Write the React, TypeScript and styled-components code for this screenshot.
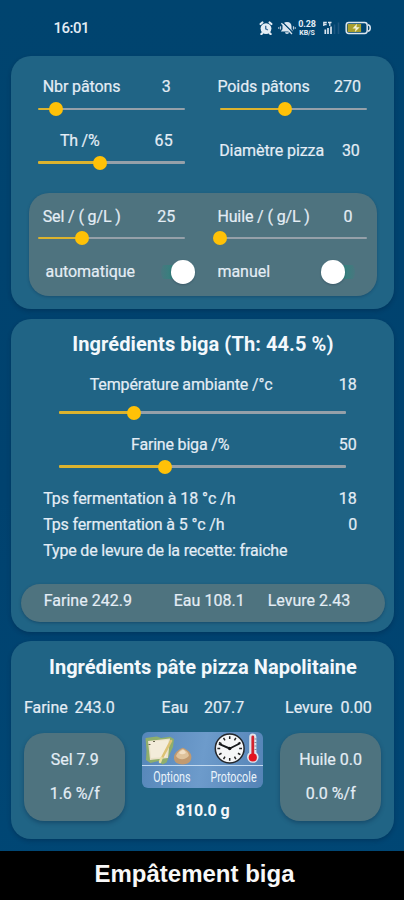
import React from "react";
import styled, { createGlobalStyle } from "styled-components";

const GlobalStyle = createGlobalStyle`
  * { box-sizing: border-box; }
  html, body { margin: 0; padding: 0; background: #004470; }
  body { font-family: Roboto, "Liberation Sans", sans-serif; color: #e4edf5; }
`;

const Screen = styled.main`
  width: 404px;
  height: 900px;
  display: flex;
  flex-direction: column;
  overflow: hidden;
  background: linear-gradient(#00446f, #00426f 55%, #004775);
`;

const StatusBar = styled.header`
  height: 56px;
  flex: none;
  display: flex;
  align-items: center;
  padding: 0 32px 0 53.5px;
`;

const Clock = styled.time`
  flex: 1;
  font-size: 15px;
  line-height: 20px;
  font-weight: 500;
  letter-spacing: -0.5px;
`;

const StatusIcons = styled.div`
  display: flex;
  align-items: center;
  height: 18px;
`;

const NetSpeed = styled.div`
  width: 20px;
  margin: 0 6px 0 1px;
  display: flex;
  flex-direction: column;
  align-items: center;
  font-weight: 700;
`;

const SpeedValue = styled.span`
  font-size: 9px;
  line-height: 10px;
  letter-spacing: -0.1px;
`;

const SpeedUnit = styled.span`
  font-size: 7px;
  line-height: 8px;
  letter-spacing: -0.1px;
`;

const Card = styled.section<{ $h: number; $gap: number }>`
  flex: none;
  width: 383.5px;
  height: ${(p) => p.$h}px;
  margin: 0 0 ${(p) => p.$gap}px 10.7px;
  border-radius: 20px;
  background: #206485;
  box-shadow: 0 2px 4px rgba(0, 25, 55, 0.3);
  display: flex;
  flex-direction: column;
`;

const Columns = styled.div<{ $l: number }>`
  display: grid;
  grid-template-columns: 147px 151px;
  column-gap: 31px;
  padding-left: ${(p) => p.$l}px;
`;

const Column = styled.div`
  display: flex;
  flex-direction: column;
`;

const Row = styled.div<{ $t?: number; $l?: number }>`
  display: flex;
  align-items: center;
  height: 20px;
  margin-top: ${(p) => p.$t ?? 0}px;
  padding-left: ${(p) => p.$l ?? 0}px;
  font-size: 16px;
  line-height: 20px;
  white-space: nowrap;
`;

const Label = styled.span<{ $w?: number; $ls?: number }>`
  flex: none;
  width: ${(p) => (p.$w ? `${p.$w}px` : "auto")};
  letter-spacing: ${(p) => p.$ls ?? 0}px;
  -webkit-text-stroke: 0.2px currentColor;
`;

const SliderBox = styled.div<{ $w: number; $t: number; $l: number }>`
  display: flex;
  align-items: center;
  width: ${(p) => p.$w}px;
  height: 14px;
  margin: ${(p) => p.$t}px 0 0 ${(p) => p.$l}px;
`;

const Filled = styled.div<{ $w: number }>`
  width: ${(p) => p.$w}px;
  height: 2.6px;
  border-radius: 1px 0 0 1px;
  background: #dcb32e;
`;

const Thumb = styled.div`
  flex: none;
  width: 14px;
  height: 14px;
  margin: 0 -7px;
  border-radius: 50%;
  background: #ffc107;
  z-index: 1;
`;

const Rest = styled.div`
  flex: 1;
  height: 2.6px;
  border-radius: 0 1px 1px 0;
  background: #95a0a9;
`;

const SubCard = styled.div`
  width: 348.5px;
  height: 103px;
  margin: 23.5px 0 0 18px;
  border-radius: 20px;
  background: #4e737f;
  box-shadow: 0 1px 3px rgba(0, 30, 60, 0.28);
`;

const Switch = styled.div<{ $on: boolean }>`
  flex: none;
  width: 34px;
  height: 24px;
  display: flex;
  align-items: center;
  justify-content: ${(p) => (p.$on ? "flex-end" : "flex-start")};
  background: linear-gradient(
      ${(p) => (p.$on ? "90deg" : "270deg")},
      #48777f,
      #36807e 30%
    )
    0 5px / 34px 14px no-repeat;
  border-radius: 12px;
`;

const SwitchWrap = styled.div<{ $l: number }>`
  display: flex;
  margin-left: ${(p) => p.$l}px;
`;

const Knob = styled.div`
  width: 23.6px;
  height: 23.6px;
  border-radius: 50%;
  background: #fff;
  box-shadow: 0 1px 2px rgba(0, 20, 40, 0.25);
`;

const Title = styled.h2<{ $t: number; $ls: number; $l?: number }>`
  height: 24px;
  margin: ${(p) => p.$t}px 0 0;
  padding-left: ${(p) => p.$l ?? 0}px;
  font-size: 20px;
  line-height: 24px;
  font-weight: 700;
  text-align: center;
  white-space: nowrap;
  letter-spacing: ${(p) => p.$ls}px;
  color: #f3f8fc;
`;

const Pill = styled.div`
  display: flex;
  align-items: center;
  width: 364px;
  height: 38.5px;
  margin: 22.5px 0 0 10px;
  padding: 0 0 3px 23px;
  border-radius: 20px;
  background: #4e737f;
  box-shadow: 0 1px 3px rgba(0, 30, 60, 0.35);
  font-size: 16px;
  line-height: 20px;
  white-space: nowrap;
`;

const Bottom = styled.div`
  display: grid;
  grid-template-columns: 101px 121px 101px;
  column-gap: 17px;
  margin: 15px 0 0 13.5px;
`;

const Tile = styled.div`
  height: 88px;
  display: flex;
  flex-direction: column;
  align-items: center;
  padding-top: 17px;
  gap: 14px;
  border-radius: 20px;
  background: #4e737f;
  box-shadow: 0 2px 4px rgba(0, 30, 60, 0.35);
  font-size: 16px;
  line-height: 20px;
`;

const Middle = styled.div`
  display: flex;
  flex-direction: column;
  align-items: center;
  margin-top: -1.5px;
`;

const ActionPanel = styled.nav`
  width: 121px;
  height: 56px;
  border-radius: 6px;
  overflow: hidden;
  background: linear-gradient(100deg, #5686b9, #6d9bcb 50%, #5483b6);
`;

const ActionIcons = styled.div`
  height: 34px;
  border-bottom: 1px solid #c2daf0;
`;

const ActionLabels = styled.div`
  display: grid;
  grid-template-columns: 60px 61px;
  justify-items: center;
  height: 22px;
  font-size: 14px;
  line-height: 22px;
`;

const ActionLabel = styled.span<{ $shift: number }>`
  width: 60px;
  text-align: center;
  color: #eaf3fb;
  transform: translateX(${(p) => p.$shift}px) scaleX(0.77);
`;

const Total = styled.strong`
  margin-top: 13px;
  font-size: 16px;
  line-height: 20px;
  letter-spacing: -0.1px;
  color: #f3f8fc;
`;

const Caption = styled.footer`
  flex: none;
  height: 49px;
  padding-right: 15px;
  background: #000;
  color: #f8f8f8;
  font: 700 24px/45px "Liberation Sans", Arial, sans-serif;
  text-align: center;
`;

const IconGap = styled.i`
  width: 5px;
`;

function Slider({ w, at, t, l = 0 }: { w: number; at: number; t: number; l?: number }) {
  return (
    <SliderBox $w={w} $t={t} $l={l}>
      <Filled $w={at} />
      <Thumb />
      <Rest />
    </SliderBox>
  );
}

function Toggle({ on, l }: { on: boolean; l: number }) {
  return (
    <SwitchWrap $l={l}>
      <Switch $on={on}>
        <Knob />
      </Switch>
    </SwitchWrap>
  );
}

function AlarmIcon() {
  return (
    <svg width="14" height="14" viewBox="0 0 14 14" fill="#e4edf5">
      <circle cx="7" cy="7.6" r="5.4" />
      <path d="M1.6 3 3.4 1.5M12.4 3 10.6 1.5M3.2 12.2 2.4 13.1M10.8 12.2l.8.9" stroke="#e4edf5" strokeWidth="2.2" strokeLinecap="round" />
      <path d="M6.700 4.800v3L8.900 9" fill="none" stroke="#3f719a" strokeWidth="1.4" />
    </svg>
  );
}

function MutedBellIcon() {
  return (
    <svg width="18" height="14" viewBox="0 0 18 14" fill="#dbe6f0">
      <path d="M9 1c3 0 4.500 2 4.500 4.500v2.700l1.700 2.300H2.800l1.700-2.300V5.500C4.500 3 6 1 9 1zM7 11.200h4a2 1.800 0 0 1-4 0z" />
      <path d="M4.500 1.300 15 11.800" stroke="#00446f" strokeWidth="1.300" />
      <path d="M3.400 2.200 14 13" stroke="#dbe6f0" strokeWidth="1.300" />
      <path d="M2.500 5.300v3.200M.7 6.200v1.600M15.500 5.300v3.200M17.300 6.200v1.600" stroke="#b9cbdc" strokeWidth="1.200" />
    </svg>
  );
}

function SignalIcon() {
  return (
    <svg width="17" height="14" viewBox="0 0 17 14">
      <path d="M.8 5V1.500h3M1 3.500h2.600M5 1.500h3.500M6.800 1.500V5" fill="none" stroke="#dbe6f0" strokeWidth="1.300" />
      <path d="M2.300 13V8.500M5 13V7M8 13V5.500" stroke="#dbe6f0" strokeWidth="1.700" />
      <path d="M11.500 13V3.500M15.500 13V1.500" stroke="#1d5680" strokeWidth="1.600" />
    </svg>
  );
}

function BatteryIcon() {
  return (
    <svg width="27" height="14" viewBox="0 0 27 14">
      <rect x="1.200" y="1.600" width="21" height="10.800" rx="2.600" fill="none" stroke="#dbe6f0" strokeWidth="1.500" />
      <path d="M23 3.800c3 .6 3 5.800 0 6.400" fill="none" stroke="#dbe6f0" strokeWidth="1.500" />
      <rect x="2.600" y="3" width="13.500" height="8" fill="#a89f2d" />
      <path d="M12 2.800 7.500 7.600h3.200l-1 3.700 5-5h-3.300z" fill="#f3f3d8" />
    </svg>
  );
}

function ActionArt() {
  const ticks = Array.from({ length: 12 }, (_, i) => i * 30);
  return (
    <svg width="121" height="33" viewBox="0 0 121 33">
      <path d="M3.500 6 15 4.500l4 1.500 9-1.200 4 2.200-1 8-3 6.500-3.500 9-4 2-4-3.500-8 2-4.500-3 .5-9z" fill="#8fae6c" />
      <path d="M6 9 28 6.500 26 26 8 28z" fill="#eae1c8" />
      <path d="M7.500 9.500 26.500 8 24 25 9 26z" fill="#f3ecda" />
      <path d="M29 9 20.500 25" stroke="#dcc274" strokeWidth="2.600" strokeLinecap="round" />
      <path d="m19.500 26-1.500 4" stroke="#e9dfa0" strokeWidth="2.500" strokeLinecap="round" />
      <path d="M6.500 12.500h2M11 9.500h2" stroke="#6b6650" />
      <path d="M32 26.500c-.5-5 3.500-8.500 8.800-10.800 4.800 2 8.800 5 8.600 9.800-.2 4.500-3.700 7-8.900 7-5 0-8-2-8.500-6z" fill="#c19a70" />
      <path d="M34 24c1.500-4 4.500-6.200 6.800-7 3.500 1.400 6 3.800 6 7-3 4-10 4.500-12.800 0z" fill="#dfc39c" />
      <path d="M37 21c1.200-1.800 2.800-2.800 4-3.200 1.500.7 2.600 1.900 2.800 3.200-2 1.600-5 1.600-6.800 0z" fill="#f1dfc4" />
      <circle cx="87.700" cy="16.500" r="14.400" fill="#f5f6f7" stroke="#23272c" strokeWidth="1.500" />
      {ticks.map((a) => (
        <path key={a} d="M87.700 4.200v2.800" stroke="#222" strokeWidth="1.500" transform={`rotate(${a} 87.700 16.500)`} />
      ))}
      <path d="m77.500 12.200 10.200 4.300 10-5" fill="none" stroke="#17191c" strokeWidth="1.900" strokeLinecap="round" strokeLinejoin="round" />
      <circle cx="87.700" cy="16.500" r="1.700" fill="#111" />
      <path d="M107.200 5a3.600 3.600 0 0 1 7.200 0v15.500a5.800 5.800 0 1 1-7.200 0z" fill="#dfe4ec" />
      <path d="M110.800 5v19" stroke="#d3222d" strokeWidth="2.800" strokeLinecap="round" />
      <circle cx="110.800" cy="25.500" r="4.100" fill="#e3141f" />
      <path d="M112.500 7h2M112.500 10.500h2M112.500 14h2M112.500 17.500h2" stroke="#6b7482" strokeWidth=".8" />
    </svg>
  );
}

export default function App() {
  return (
    <>
      <GlobalStyle />
      <Screen>
        <StatusBar>
          <Clock>16:01</Clock>
          <StatusIcons>
            <AlarmIcon />
            <IconGap />
            <MutedBellIcon />
            <NetSpeed>
              <SpeedValue>0.28</SpeedValue>
              <SpeedUnit>KB/S</SpeedUnit>
            </NetSpeed>
            <SignalIcon />
            <IconGap />
            <BatteryIcon />
          </StatusIcons>
        </StatusBar>

        <Card $h={253} $gap={9.5}>
          <Columns $l={27.5}>
            <Column>
              <Row $t={21} $l={4.5}>
                <Label $w={119} $ls={-0.1}>Nbr pâtons</Label>
                <Label>3</Label>
              </Row>
              <Slider t={5} w={147} at={18} />
              <Row $t={15} $l={21.7}>
                <Label $w={94.7} $ls={-0.2}>Th /%</Label>
                <Label $ls={0.2}>65</Label>
              </Row>
              <Slider t={4.5} w={147} at={61.8} />
            </Column>
            <Column>
              <Row $t={21} $l={1.2}>
                <Label $w={116.6} $ls={-0.08}>Poids pâtons</Label>
                <Label>270</Label>
              </Row>
              <Slider t={5} w={147} at={64.8} l={4.3} />
              <Row $t={25} $l={3}>
                <Label $w={122.7} $ls={-0.08}>Diamètre pizza</Label>
                <Label>30</Label>
              </Row>
            </Column>
          </Columns>
          <SubCard>
            <Columns $l={9.5}>
              <Column>
                <Row $t={13.5} $l={4.5}>
                  <Label $w={114.5} $ls={-0.12}>Sel / ( g/L )</Label>
                  <Label $ls={0.1}>25</Label>
                </Row>
                <Slider t={4.5} w={147} at={44.2} />
                <Row $t={17} $l={7.3}>
                  <Label $w={90} $ls={-0.04}>automatique</Label>
                  <Toggle on l={25.4} />
                </Row>
              </Column>
              <Column>
                <Row $t={13.5} $l={1.2}>
                  <Label $w={126} $ls={-0.12}>Huile / ( g/L )</Label>
                  <Label>0</Label>
                </Row>
                <Slider t={4.5} w={147} at={0} l={4.3} />
                <Row $t={17} $l={1.2}>
                  <Label $w={90}>manuel</Label>
                  <Toggle on={false} l={13.6} />
                </Row>
              </Column>
            </Columns>
          </SubCard>
        </Card>

        <Card $h={313} $gap={9.5}>
          <Title $t={13.5} $ls={0.08} $l={1}>Ingrédients biga (Th: 44.5 %)</Title>
          <Row $t={19} $l={79}>
            <Label $w={249} $ls={-0.14}>Température ambiante /°c</Label>
            <Label>18</Label>
          </Row>
          <Slider t={10.5} w={287.5} at={75} l={48} />
          <Row $t={15.5} $l={120.3}>
            <Label $w={207.7} $ls={-0.18}>Farine biga /%</Label>
            <Label>50</Label>
          </Row>
          <Slider t={4.5} w={287.5} at={106.5} l={48} />
          <Row $t={15.5} $l={32.5}>
            <Label $w={295.5} $ls={-0.06}>Tps fermentation à 18 °c /h</Label>
            <Label>18</Label>
          </Row>
          <Row $t={6} $l={32.5}>
            <Label $w={305} $ls={-0.14}>Tps fermentation à 5 °c /h</Label>
            <Label>0</Label>
          </Row>
          <Row $t={6} $l={32.5}>
            <Label $ls={-0.17}>Type de levure de la recette: fraiche</Label>
          </Row>
          <Pill>
            <Label $w={130} $ls={0.02}>Farine 242.9</Label>
            <Label $w={94} $ls={0.05}>Eau 108.1</Label>
            <Label>Levure 2.43</Label>
          </Pill>
        </Card>

        <Card $h={197.5} $gap={12.5}>
          <Title $t={14} $ls={0.03} $l={1}>Ingrédients pâte pizza Napolitaine</Title>
          <Row $t={19} $l={13.2}>
            <Label $w={50.7}>Farine</Label>
            <Label $w={87}>243.0</Label>
            <Label $w={42.5}>Eau</Label>
            <Label $w={81}>207.7</Label>
            <Label $w={55.5}>Levure</Label>
            <Label>0.00</Label>
          </Row>
          <Bottom>
            <Tile>
              <Label>Sel 7.9</Label>
              <Label>1.6 %/f</Label>
            </Tile>
            <Middle>
              <ActionPanel>
                <ActionIcons>
                  <ActionArt />
                </ActionIcons>
                <ActionLabels>
                  <ActionLabel $shift={0}>Options</ActionLabel>
                  <ActionLabel $shift={0.5}>Protocole</ActionLabel>
                </ActionLabels>
              </ActionPanel>
              <Total>810.0 g</Total>
            </Middle>
            <Tile>
              <Label>Huile 0.0</Label>
              <Label>0.0 %/f</Label>
            </Tile>
          </Bottom>
        </Card>

        <Caption>Empâtement biga</Caption>
      </Screen>
    </>
  );
}
